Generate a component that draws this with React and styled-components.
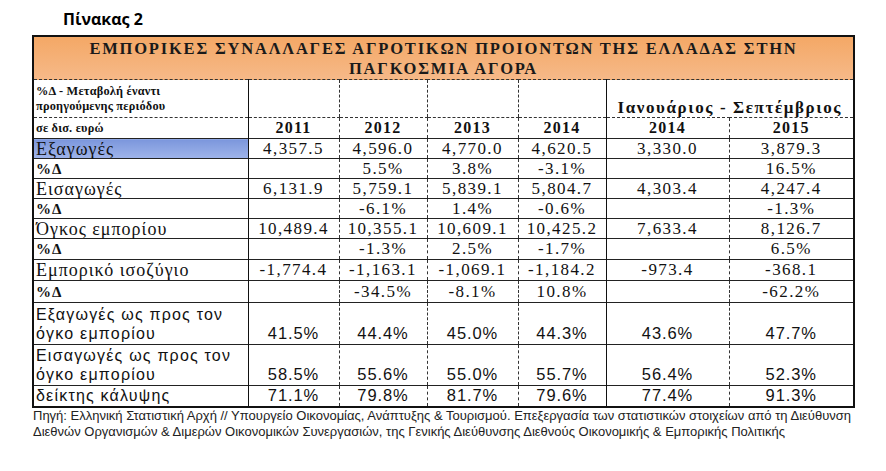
import React from "react";
import styled, { createGlobalStyle } from "styled-components";

const GlobalStyle = createGlobalStyle`
  body {
    margin: 0;
    background: #fff;
    color: #111;
  }
`;

const Page = styled.div`
  width: 886px;
  height: 471px;
  box-sizing: border-box;
  padding: 8px 0 0 32px;
`;

const Heading = styled.div`
  font-family: "Open Sans", sans-serif;
  font-weight: 700;
  font-size: 16px;
  line-height: 22px;
  height: 27px;
  padding-left: 31px;
  color: #000;
`;

const Table = styled.table`
  width: 823px;
  table-layout: fixed;
  border-collapse: collapse;
  border: 2px solid #111;
`;

const TitleCell = styled.td`
  height: 40px;
  padding: 2px 0 0;
  background: linear-gradient(#f4a866, #f6b988);
  border-bottom: 1px dashed #333;
  text-align: center;
  vertical-align: top;
  font-family: "Liberation Serif", serif;
  font-weight: 700;
  font-size: 16.5px;
  line-height: 20px;
  letter-spacing: 1.8px;
  color: #1a1a1a;
`;

const HeadCell = styled.td`
  height: ${(p) => p.$h}px;
  padding: 0 2px;
  border-left: ${(p) => (p.$solid ? "1px solid #111" : "1px dashed #333")};
  border-bottom: 1px dashed #333;
  text-align: center;
  vertical-align: ${(p) => (p.$bottom ? "bottom" : "middle")};
  font-family: "Liberation Serif", serif;
  font-weight: 700;
  font-size: ${(p) => (p.$big ? 17 : 16)}px;
  letter-spacing: ${(p) => (p.$big ? 1.6 : 1.2)}px;
  line-height: 18px;
`;

const NoteCell = styled.td`
  height: ${(p) => p.$h}px;
  padding: 0 2px;
  border-bottom: 1px dashed #333;
  vertical-align: middle;
  font-family: "Liberation Serif", serif;
  font-weight: 700;
  font-size: 12.3px;
  line-height: 15px;
  letter-spacing: 0.2px;
`;

const LabelCell = styled.td`
  height: ${(p) => p.$h}px;
  padding: 0 2px ${(p) => (p.$sans ? 1 : 0)}px;
  border-top: 1px solid #222;
  border-right: 1px solid #111;
  background: ${(p) => (p.$hl ? "linear-gradient(#7b96dc, #9fb4ea)" : "transparent")};
  vertical-align: ${(p) => (p.$sans ? "bottom" : "middle")};
  font-family: ${(p) => (p.$sans ? '"Liberation Sans", sans-serif' : '"Liberation Serif", serif')};
  font-weight: ${(p) => (p.$bold ? 700 : 400)};
  font-size: ${(p) => (p.$bold ? 15 : p.$sans ? 16 : 18)}px;
  letter-spacing: ${(p) => (p.$sans ? 1.2 : 1)}px;
  line-height: ${(p) => (p.$sans ? 19 : 18)}px;
  white-space: nowrap;
`;

const ValueCell = styled.td`
  height: ${(p) => p.$h}px;
  padding: 0 0 ${(p) => (p.$sans ? 1 : 0)}px;
  border-top: 1px solid #222;
  border-left: ${(p) => (p.$solid ? "1px solid #111" : "1px dashed #333")};
  text-align: center;
  vertical-align: ${(p) => (p.$sans ? "bottom" : "middle")};
  font-family: ${(p) => (p.$sans ? '"Liberation Sans", sans-serif' : '"Liberation Serif", serif')};
  font-size: ${(p) => (p.$sans ? 16.5 : 17)}px;
  letter-spacing: ${(p) => (p.$sans ? 0.9 : 1.4)}px;
  line-height: ${(p) => (p.$sans ? 19 : 18)}px;
  white-space: nowrap;
`;

const Footer = styled.div`
  padding-left: 1px;
  font-family: "Liberation Sans", sans-serif;
  font-size: 13px;
  line-height: 16px;
  color: #222;
  white-space: nowrap;
`;

const widths = [215, 91, 88, 91, 88, 123, 125];
const years = ["2011", "2012", "2013", "2014", "2014", "2015"];

const rows = [
  { label: "Εξαγωγές", hl: true, cells: ["4,357.5", "4,596.0", "4,770.0", "4,620.5", "3,330.0", "3,879.3"] },
  { label: "%Δ", bold: true, cells: ["", "5.5%", "3.8%", "-3.1%", "", "16.5%"] },
  { label: "Εισαγωγές", cells: ["6,131.9", "5,759.1", "5,839.1", "5,804.7", "4,303.4", "4,247.4"] },
  { label: "%Δ", bold: true, cells: ["", "-6.1%", "1.4%", "-0.6%", "", "-1.3%"] },
  { label: "Όγκος εμπορίου", cells: ["10,489.4", "10,355.1", "10,609.1", "10,425.2", "7,633.4", "8,126.7"] },
  { label: "%Δ", bold: true, h: 20, cells: ["", "-1.3%", "2.5%", "-1.7%", "", "6.5%"] },
  { label: "Εμπορικό ισοζύγιο", h: 20, cells: ["-1,774.4", "-1,163.1", "-1,069.1", "-1,184.2", "-973.4", "-368.1"] },
  { label: "%Δ", bold: true, h: 21, cells: ["", "-34.5%", "-8.1%", "10.8%", "", "-62.2%"] },
  { label: ["Εξαγωγές ως προς τον", "όγκο εμπορίου"], sans: true, h: 40, cells: ["41.5%", "44.4%", "45.0%", "44.3%", "43.6%", "47.7%"] },
  { label: ["Εισαγωγές ως προς τον", "όγκο εμπορίου"], sans: true, h: 39, cells: ["58.5%", "55.6%", "55.0%", "55.7%", "56.4%", "52.3%"] },
  { label: "δείκτης κάλυψης", sans: true, h: 19, cells: ["71.1%", "79.8%", "81.7%", "79.6%", "77.4%", "91.3%"] },
];

const renderLabel = (label) =>
  Array.isArray(label)
    ? label.map((line, i) => (
        <React.Fragment key={i}>
          {i > 0 && <br />}
          {line}
        </React.Fragment>
      ))
    : label;

export default function App() {
  return (
    <Page>
      <GlobalStyle />
      <Heading>Πίνακας 2</Heading>
      <Table>
        <colgroup>
          {widths.map((w, i) => (
            <col key={i} style={{ width: w }} />
          ))}
        </colgroup>
        <tbody>
          <tr>
            <TitleCell colSpan={7}>
              ΕΜΠΟΡΙΚΕΣ ΣΥΝΑΛΛΑΓΕΣ ΑΓΡΟΤΙΚΩΝ ΠΡΟΙΟΝΤΩΝ ΤΗΣ ΕΛΛΑΔΑΣ ΣΤΗΝ
              <br />
              ΠΑΓΚΟΣΜΙΑ ΑΓΟΡΑ
            </TitleCell>
          </tr>
          <tr>
            <NoteCell $h={37}>
              %Δ - Μεταβολή έναντι
              <br />
              προηγούμενης περιόδου
            </NoteCell>
            <HeadCell $h={37} $solid />
            <HeadCell $h={37} />
            <HeadCell $h={37} />
            <HeadCell $h={37} />
            <HeadCell $h={37} $solid $bottom $big colSpan={2}>
              Ιανουάριος - Σεπτέμβριος
            </HeadCell>
          </tr>
          <tr>
            <NoteCell $h={20}>σε δισ. ευρώ</NoteCell>
            {years.map((y, i) => (
              <HeadCell key={i} $h={20} $solid={i === 0 || i === 4}>
                {y}
              </HeadCell>
            ))}
          </tr>
          {rows.map((r, ri) => (
            <tr key={ri}>
              <LabelCell $h={r.h || 19} $hl={r.hl} $bold={r.bold} $sans={r.sans}>
                {renderLabel(r.label)}
              </LabelCell>
              {r.cells.map((c, ci) => (
                <ValueCell key={ci} $h={r.h || 19} $sans={r.sans} $solid={ci === 0 || ci === 4}>
                  {c}
                </ValueCell>
              ))}
            </tr>
          ))}
        </tbody>
      </Table>
      <Footer>
        Πηγή: Ελληνική Στατιστική Αρχή // Υπουργείο Οικονομίας, Ανάπτυξης &amp; Τουρισμού. Επεξεργασία των στατιστικών στοιχείων από τη Διεύθυνση
        <br />
        Διεθνών Οργανισμών &amp; Διμερών Οικονομικών Συνεργασιών, της Γενικής Διεύθυνσης Διεθνούς Οικονομικής &amp; Εμπορικής Πολιτικής
      </Footer>
    </Page>
  );
}
